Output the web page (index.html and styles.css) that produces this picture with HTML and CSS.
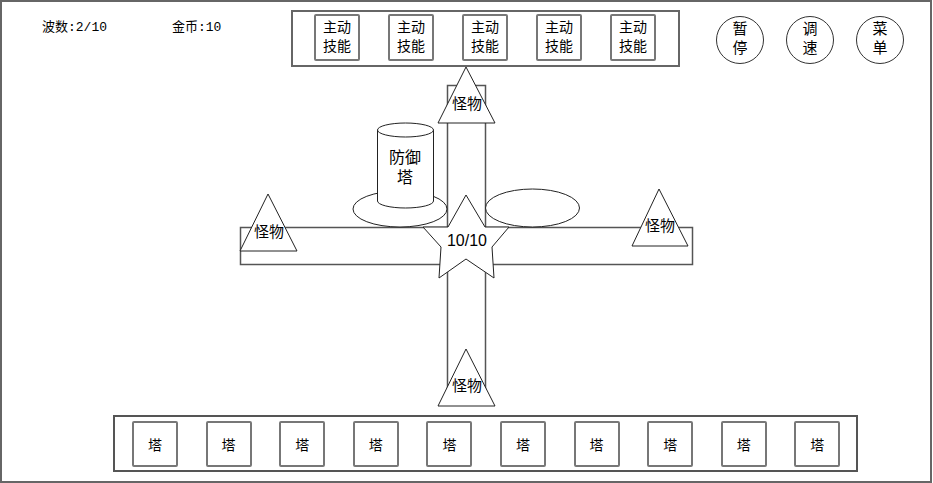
FILE: index.html
```html
<!DOCTYPE html>
<html lang="zh-CN">
<head>
    <meta charset="UTF-8">
    <title>塔防 - 原型</title>
    <link rel="stylesheet" href="styles.css">
</head>
<body>
    <div class="frame">
        <header class="top">
            <div class="stats">
                <span class="stat wave">波数:2/10</span>
                <span class="stat gold">金币:10</span>
            </div>
            <div class="skill-bar">
                <div class="skill">主动<br>技能</div>
                <div class="skill">主动<br>技能</div>
                <div class="skill">主动<br>技能</div>
                <div class="skill">主动<br>技能</div>
                <div class="skill">主动<br>技能</div>
            </div>
            <div class="controls">
                <div class="ctl">暂<br>停</div>
                <div class="ctl">调<br>速</div>
                <div class="ctl">菜<br>单</div>
            </div>
        </header>

        <svg class="map" width="928" height="346" viewBox="2 67 928 346">
            <!-- roads -->
            <rect class="road" x="240.5" y="227.5" width="452" height="37"/>
            <rect class="road" x="447.5" y="85.5" width="38" height="310"/>

            <!-- tower base + empty slot -->
            <ellipse class="shape" cx="400" cy="209" rx="47" ry="18"/>
            <ellipse class="shape" cx="532.5" cy="208" rx="47" ry="19"/>

            <!-- tower cylinder -->
            <path class="shape" d="M377.5,130 L377.5,201 A28,7 0 0 0 433.5,201 L433.5,130 Z"/>
            <ellipse class="shape" cx="405.5" cy="130" rx="28" ry="7"/>
            <text class="label big" x="405" y="157">防御</text>
            <text class="label big" x="405" y="177">塔</text>

            <!-- monsters -->
            <polygon class="shape" points="466,67 438,123 495,123"/>
            <text class="label mid" x="467" y="103">怪物</text>
            <polygon class="shape" points="268,194 240,251 297,251"/>
            <text class="label mid" x="269" y="231">怪物</text>
            <polygon class="shape" points="659,189 632,246 688,246"/>
            <text class="label mid" x="660" y="225">怪物</text>
            <polygon class="shape" points="466,349 438,406 495,406"/>
            <text class="label mid" x="467" y="385">怪物</text>

            <!-- base -->
            <polygon class="shape" points="466,195 485,227 509,227 492,247 494,278 466,259 439,278 441,247 423,227 448,227"/>
            <text class="label num" x="467" y="240">10/10</text>
        </svg>

        <footer class="tower-bar">
            <div class="slot">塔</div>
            <div class="slot">塔</div>
            <div class="slot">塔</div>
            <div class="slot">塔</div>
            <div class="slot">塔</div>
            <div class="slot">塔</div>
            <div class="slot">塔</div>
            <div class="slot">塔</div>
            <div class="slot">塔</div>
            <div class="slot">塔</div>
        </footer>
    </div>
</body>
</html>
```

FILE: styles.css
```css
body {
    margin: 0;
    font-family: "Liberation Mono", "Noto Sans CJK SC", monospace;
    font-size: 14px;
    color: #000;
    background: #fff;
}

.frame {
    width: 932px;
    height: 483px;
    box-sizing: border-box;
    border: 2px solid #666;
    display: flex;
    flex-direction: column;
}

.top {
    display: flex;
    align-items: flex-start;
    height: 65px;
}

.stats {
    width: 249px;
    padding: 17px 0 0 40px;
    display: flex;
    font-size: 13px;
    line-height: 18px;
}

.wave {
    width: 130px;
}

.skill-bar {
    margin-top: 8px;
    width: 389px;
    height: 57px;
    box-sizing: border-box;
    border: 2px solid #666;
    padding: 2px 0 0 21px;
    display: flex;
    gap: 28px;
}

.skill {
    width: 46px;
    height: 47px;
    box-sizing: border-box;
    border: 2px solid #777;
    border-radius: 2px;
    display: flex;
    align-items: center;
    justify-content: center;
    text-align: center;
    line-height: 19px;
}

.controls {
    margin: 14px 0 0 36px;
    display: flex;
    gap: 22px;
}

.ctl {
    width: 48px;
    height: 48px;
    box-sizing: border-box;
    border: 1px solid #333;
    border-radius: 50%;
    display: flex;
    align-items: center;
    justify-content: center;
    text-align: center;
    line-height: 19px;
    font-size: 15px;
}

.map {
    display: block;
}

.road {
    fill: #fff;
    stroke: #555;
    stroke-width: 1.5;
}

.shape {
    fill: #fff;
    stroke: #222;
    stroke-width: 1;
}

.label {
    font-family: "Liberation Sans", "Noto Sans CJK SC", sans-serif;
    font-size: 14px;
    text-anchor: middle;
    dominant-baseline: central;
    fill: #000;
}

.label.mid {
    font-size: 15px;
}

.label.big {
    font-size: 16px;
}

.label.num {
    font-size: 16px;
}

.tower-bar {
    margin: 2px 0 0 111px;
    width: 745px;
    height: 57px;
    box-sizing: border-box;
    border: 2px solid #555;
    padding: 4px 0 0 17px;
    display: flex;
    gap: 27.6px;
}

.slot {
    width: 46px;
    height: 46px;
    box-sizing: border-box;
    border: 2px solid #777;
    border-radius: 2px;
    display: flex;
    align-items: center;
    justify-content: center;
}
```
